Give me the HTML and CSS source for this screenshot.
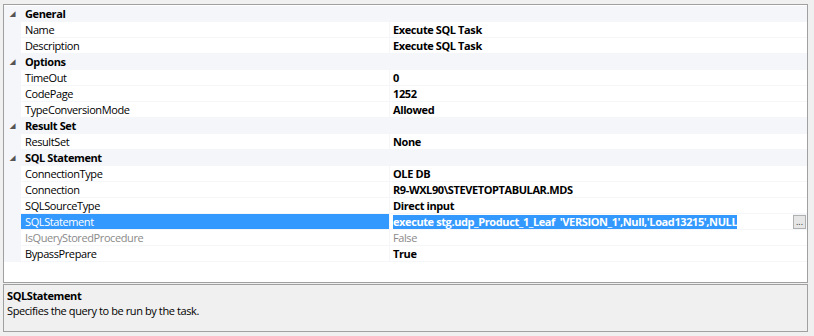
FILE: index.html
```
<!DOCTYPE html>
<html lang="en">

<head>
    <meta charset="UTF-8">
    <title>Properties</title>
    <link rel="stylesheet" href="styles.css">
</head>

<body>
    <div class="frame">
        <div class="grid">
            <div class="cat"><span class="arrow">&#9698;</span>General</div>
            <div class="row"><span class="name">Name</span><span class="value">Execute SQL Task</span></div>
            <div class="row"><span class="name">Description</span><span class="value">Execute SQL Task</span></div>

            <div class="cat"><span class="arrow">&#9698;</span>Options</div>
            <div class="row"><span class="name">TimeOut</span><span class="value">0</span></div>
            <div class="row"><span class="name">CodePage</span><span class="value">1252</span></div>
            <div class="row"><span class="name">TypeConversionMode</span><span class="value">Allowed</span></div>

            <div class="cat"><span class="arrow">&#9698;</span>Result Set</div>
            <div class="row"><span class="name">ResultSet</span><span class="value">None</span></div>

            <div class="cat"><span class="arrow">&#9698;</span>SQL Statement</div>
            <div class="row"><span class="name">ConnectionType</span><span class="value">OLE DB</span></div>
            <div class="row"><span class="name">Connection</span><span class="value">R9-WXL90\STEVETOPTABULAR.MDS</span></div>
            <div class="row"><span class="name">SQLSourceType</span><span class="value">Direct input</span></div>
            <div class="row selected">
                <span class="name">SQLStatement</span>
                <span class="value"><span class="hl">execute stg.udp_Product_1_Leaf&nbsp; 'VERSION_1',Null,'Load13215',NULL</span></span>
                <span class="dots">...</span>
            </div>
            <div class="row disabled"><span class="name">IsQueryStoredProcedure</span><span class="value">False</span></div>
            <div class="row"><span class="name">BypassPrepare</span><span class="value">True</span></div>
        </div>

        <div class="help">
            <div class="help-title">SQLStatement</div>
            <div class="help-text">Specifies the query to be run by the task.</div>
        </div>
    </div>
</body>

</html>
```

FILE: styles.css
```
body {
    margin: 0;
    background-color: #F0F0F0;
    font-family: 'Open Sans', sans-serif;
    font-size: 11px;
    letter-spacing: -0.4px;
    color: #000;
}

.frame {
    width: 814px;
    height: 336px;
    padding: 4px 6px 0 3px;
    box-sizing: border-box;
    display: flex;
    flex-direction: column;
    gap: 1px;
}

.grid {
    height: 279px;
    box-sizing: border-box;
    border: 1px solid #A0A0A0;
    background-color: #fff;
    padding-top: 1px;
}

.cat,
.row {
    height: 16px;
    line-height: 16px;
    display: flex;
    align-items: center;
    white-space: nowrap;
}

.cat {
    background-color: #F4F6FA;
    font-weight: bold;
    padding-left: 21px;
    position: relative;
}

.arrow {
    position: absolute;
    left: 6px;
    top: 0;
    font-size: 7px;
    color: #555;
}

.row {
    background-color: #F4F6FA;
    padding-left: 17px;
}

.name {
    width: 364px;
    height: 15px;
    line-height: 16px;
    padding-left: 4px;
    background-color: #fff;
    margin-bottom: 1px;
    margin-right: 1px;
}

.value {
    flex: 1;
    height: 15px;
    line-height: 16px;
    padding-left: 3px;
    background-color: #fff;
    font-weight: bold;
    margin-bottom: 1px;
}

.row.selected .name {
    background-color: #3399FF;
    color: #fff;
}

.hl {
    background-color: #3399FF;
    color: #fff;
    line-height: 14px;
    display: inline-block;
}

.dots {
    width: 13px;
    height: 14px;
    line-height: 12px;
    margin: 0 1px 1px 0;
    box-sizing: border-box;
    border: 1px solid #B0B0B0;
    background-color: #E6E6E6;
    font-size: 9px;
    letter-spacing: 0;
    text-align: center;
    color: #333;
}

.row.disabled .name,
.row.disabled .value {
    color: #8A8A8A;
    font-weight: normal;
}

.help {
    height: 48px;
    box-sizing: border-box;
    border: 1px solid #A0A0A0;
    padding: 3px 3px;
    line-height: 15px;
}

.help-title {
    font-weight: bold;
}
```
